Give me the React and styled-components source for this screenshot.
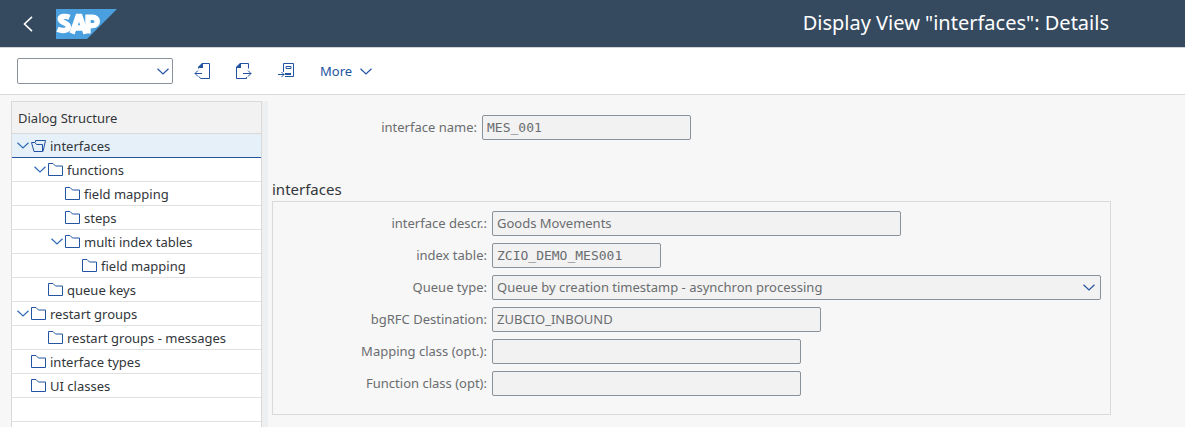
import React from "react";
import styled, { createGlobalStyle, css } from "styled-components";

const sans = `"Noto Sans", Roboto, "Liberation Sans", sans-serif`;
const mono = `"DejaVu Sans Mono", "Liberation Mono", monospace`;

const GlobalStyle = createGlobalStyle`
  *, *::before, *::after { box-sizing: border-box; }
  body { margin: 0; background: #f7f7f7; color: #32363a; font: 13px/20px ${sans}; }
  button, input, select { font: inherit; color: inherit; margin: 0; }
  h1, h2, ul { margin: 0; padding: 0; font-weight: 400; }
`;

const Page = styled.div`
  display: flex;
  flex-direction: column;
  min-height: 100vh;
`;

const Header = styled.header`
  display: flex;
  align-items: center;
  height: 48px;
  padding: 0 76px 0 16px;
  background: #354a5f;
  border-bottom: 1px solid #d3d5d8;
  color: #fff;
`;

const IconButton = styled.button`
  display: flex;
  align-items: center;
  justify-content: center;
  width: 24px;
  height: 24px;
  padding: 0;
  border: 0;
  background: none;
  color: inherit;
  cursor: pointer;
`;

const Logo = styled.svg`
  display: block;
  width: 61px;
  height: 30px;
  margin-left: 16px;
`;

const Title = styled.h1`
  margin-left: auto;
  padding-bottom: 2px;
  font-size: 20px;
  line-height: 28px;
  white-space: nowrap;
`;

const Toolbar = styled.div`
  display: flex;
  align-items: center;
  gap: 17px;
  height: 47px;
  padding: 0 17px;
  background: #fff;
  border-bottom: 1px solid #d9d9d9;
  color: #2354a2;
`;

const SelectWrap = styled.span`
  display: grid;
  align-items: center;
  ${(p) => (p.$grow ? "flex: 1;" : "width: 156px;")}
  min-width: 0;
  > * { grid-area: 1 / 1; }
  > svg { justify-self: end; margin-right: ${(p) => (p.$grow ? 6 : 4)}px; pointer-events: none; color: #2354a2; }
`;

const control = css`
  height: 25px;
  padding: 0 4px 2px;
  border: 1px solid #89919a;
  border-radius: 2px;
  background: #f2f2f2;
  color: #6a6d70;
  opacity: 1;
`;

const Select = styled.select`
  ${control}
  width: 100%;
  appearance: none;
  ${(p) => p.$command && "background: #fff; height: 26px;"}
`;

const Input = styled.input`
  ${control}
  width: ${(p) => p.$width}px;
  min-width: 0;
  ${(p) => p.$mono && `padding-bottom: 0; font-family: ${mono};`}
`;

const MoreButton = styled.button`
  display: flex;
  align-items: center;
  gap: 8px;
  padding: 0;
  border: 0;
  background: none;
  cursor: pointer;
`;

const Actions = styled.div`
  display: flex;
  align-items: center;
  gap: 18px;
  > ${MoreButton} { margin-left: 4px; }
`;

const Body = styled.div`
  display: flex;
  flex: 1;
  padding: 6px 0 0 11px;
`;

const Sidebar = styled.nav`
  flex: none;
  width: 257px;
  border-right: 6px solid #edeff0;
`;

const TreePane = styled.div`
  height: 100%;
  border: 1px solid #d9d9d9;
  border-bottom: 0;
  background: #fff;
`;

const TreeTitle = styled.h2`
  height: 32px;
  padding: 0 6px;
  border-bottom: 1px solid #d9d9d9;
  background: #f2f2f2;
  font-size: 13px;
  line-height: 32px;
`;

const TreeList = styled.ul`
  list-style: none;
`;

const TreeItem = styled.li`
  display: flex;
  align-items: center;
  height: 24px;
  padding-left: ${(p) => 5 + p.$level * 17}px;
  border-bottom: 1px solid ${(p) => (p.$selected ? "#2354a2" : "#e1e1e1")};
  background: ${(p) => (p.$selected ? "#e5f0f8" : "transparent")};
`;

const Toggle = styled.button`
  display: flex;
  width: 14px;
  padding: 0;
  border: 0;
  background: none;
  color: #2f6cb5;
`;

const ToggleSpace = styled.span`
  width: 14px;
`;

const ItemButton = styled.button`
  display: flex;
  align-items: center;
  gap: 4px;
  padding: 0;
  border: 0;
  background: none;
  line-height: 20px;
  white-space: nowrap;
  > svg { color: #2354a2; }
`;

const Main = styled.main`
  flex: 1;
  min-width: 0;
  padding: 14px 74px 12px 4px;
`;

const Field = styled.div`
  display: flex;
  align-items: center;
  gap: 5px;
`;

const Label = styled.label`
  flex: none;
  width: ${(p) => p.$width}px;
  padding-bottom: 2px;
  color: #6a6d70;
  text-align: right;
  white-space: nowrap;
`;

const Group = styled.section`
  margin-top: 39px;
`;

const GroupTitle = styled.h2`
  font-size: 15px;
  line-height: 20px;
`;

const GroupBox = styled.div`
  display: flex;
  flex-direction: column;
  gap: 7px;
  margin-top: 2px;
  padding: 9px 9px 18px 0;
  border: 1px solid #d9d9d9;
`;

const Chevron = () => (
  <svg width="12" height="7" viewBox="0 0 12 7" fill="none" stroke="currentColor" strokeWidth="1.2" aria-hidden="true">
    <path d="M.5 .7 6 6 11.5 .7" />
  </svg>
);

const BackIcon = () => (
  <svg width="10" height="16" viewBox="0 0 10 16" fill="none" stroke="#fff" strokeWidth="1.6" aria-hidden="true">
    <path d="M9 .8 1.500 8 9 15.200" />
  </svg>
);

const Folder = () => (
  <svg width="15" height="13" viewBox="0 0 15 13" fill="none" stroke="currentColor" aria-hidden="true">
    <path d="M.5 12.5V.5H5L7.5 3h7v9.5z" />
  </svg>
);

const FolderOpen = () => (
  <svg width="15" height="13" viewBox="0 0 15 13" fill="none" stroke="currentColor" aria-hidden="true">
    <path d="M.5 3.500H4L5.500 5.500H11.500V12.500H3z M4.500 3V1.500H14.500L12 12.500" />
  </svg>
);

const PrevDocIcon = () => (
  <svg width="16" height="16" viewBox="0 0 16 16" fill="none" stroke="currentColor" aria-hidden="true">
    <path d="M4.500 5.500V4.500L8.500 .5h7v15H6.500L5 13.500M8 10.500H1M4 7.500l-3 3 3 3" />
    <path d="M4 5V4l4-4h1v5z" fill="currentColor" stroke="none" />
  </svg>
);

const NextDocIcon = () => (
  <svg width="16" height="16" viewBox="0 0 16 16" fill="none" stroke="currentColor" aria-hidden="true">
    <path d="M.5 4.500V15.500H10.500V14M12.500 5.500V.5H4.500L.5 4.500M7 10.500h8M12 7.500l3 3-3 3" />
    <path d="M0 5V4l4-4h1v5z" fill="currentColor" stroke="none" />
  </svg>
);

const InsertDocIcon = () => (
  <svg width="16" height="16" viewBox="0 0 16 16" fill="none" stroke="currentColor" aria-hidden="true">
    <path d="M5.500 9V.5h10v13H7M8 3.500h5v2H8zM0 11.500h6M3.500 9l2.500 2.500L3.500 14" />
    <path d="M7 10h6v2H7z" fill="currentColor" stroke="none" />
  </svg>
);

const tree = [
  { name: "interfaces", level: 0, open: true, selected: true },
  { name: "functions", level: 1, open: true },
  { name: "field mapping", level: 2 },
  { name: "steps", level: 2 },
  { name: "multi index tables", level: 2, open: true },
  { name: "field mapping", level: 3 },
  { name: "queue keys", level: 1 },
  { name: "restart groups", level: 0, open: true },
  { name: "restart groups - messages", level: 1 },
  { name: "interface types", level: 0 },
  { name: "UI classes", level: 0 },
];

const fields = [
  { id: "descr", label: "interface descr.:", value: "Goods Movements", width: 409 },
  { id: "table", label: "index table:", value: "ZCIO_DEMO_MES001", width: 169, mono: true },
  { id: "queue", label: "Queue type:", value: "Queue by creation timestamp - asynchron processing", select: true },
  { id: "dest", label: "bgRFC Destination:", value: "ZUBCIO_INBOUND", width: 329 },
  { id: "mapping", label: "Mapping class (opt.):", value: "", width: 309 },
  { id: "function", label: "Function class (opt):", value: "", width: 309 },
];

export default function App() {
  return (
    <Page>
      <GlobalStyle />
      <Header>
        <IconButton aria-label="Back"><BackIcon /></IconButton>
        <Logo viewBox="0 0 61 30" role="img" aria-label="SAP">
          <path d="M0 0h61L31 30H0z" fill="#4a9fdf" />
          <g fill="none" stroke="#fff" strokeWidth="5.4">
            <path d="M13.500 8.200C10 6.800 4.200 7 4.200 10 4.200 14 12.500 13.500 12.500 17.800 12.500 22 6 22.300 1.500 20.300" />
            <path d="M16 24.500 22 7.500h2L30 24.500M19 19h8" />
            <path d="M32 24.500V8.200h4.500c6.300 0 6.300 8.400 0 8.400h-4" />
          </g>
        </Logo>
        <Title>Display View "interfaces": Details</Title>
      </Header>
      <Toolbar>
        <SelectWrap>
          <Select $command aria-label="Command" defaultValue=""><option value="" /></Select>
          <Chevron />
        </SelectWrap>
        <Actions>
          <IconButton aria-label="Previous entry"><PrevDocIcon /></IconButton>
          <IconButton aria-label="Next entry"><NextDocIcon /></IconButton>
          <IconButton aria-label="Position"><InsertDocIcon /></IconButton>
          <MoreButton>More <Chevron /></MoreButton>
        </Actions>
      </Toolbar>
      <Body>
        <Sidebar aria-label="Dialog Structure">
          <TreePane>
            <TreeTitle>Dialog Structure</TreeTitle>
            <TreeList>
              {tree.map((item, i) => (
                <TreeItem key={i} $level={item.level} $selected={item.selected}>
                  {item.open ? (
                    <Toggle aria-label={`Collapse ${item.name}`} aria-expanded="true"><Chevron /></Toggle>
                  ) : (
                    <ToggleSpace />
                  )}
                  <ItemButton>{item.selected ? <FolderOpen /> : <Folder />}{item.name}</ItemButton>
                </TreeItem>
              ))}
              <TreeItem $level={0} aria-hidden="true" />
            </TreeList>
          </TreePane>
        </Sidebar>
        <Main>
          <Field>
            <Label htmlFor="name" $width={205}>interface name:</Label>
            <Input id="name" $width={209} $mono readOnly value="MES_001" />
          </Field>
          <Group>
            <GroupTitle>interfaces</GroupTitle>
            <GroupBox>
              {fields.map((f) => (
                <Field key={f.id}>
                  <Label htmlFor={f.id} $width={214}>{f.label}</Label>
                  {f.select ? (
                    <SelectWrap $grow>
                      <Select id={f.id} disabled defaultValue={f.value}><option>{f.value}</option></Select>
                      <Chevron />
                    </SelectWrap>
                  ) : (
                    <Input id={f.id} $width={f.width} $mono={f.mono} readOnly value={f.value} />
                  )}
                </Field>
              ))}
            </GroupBox>
          </Group>
        </Main>
      </Body>
    </Page>
  );
}
